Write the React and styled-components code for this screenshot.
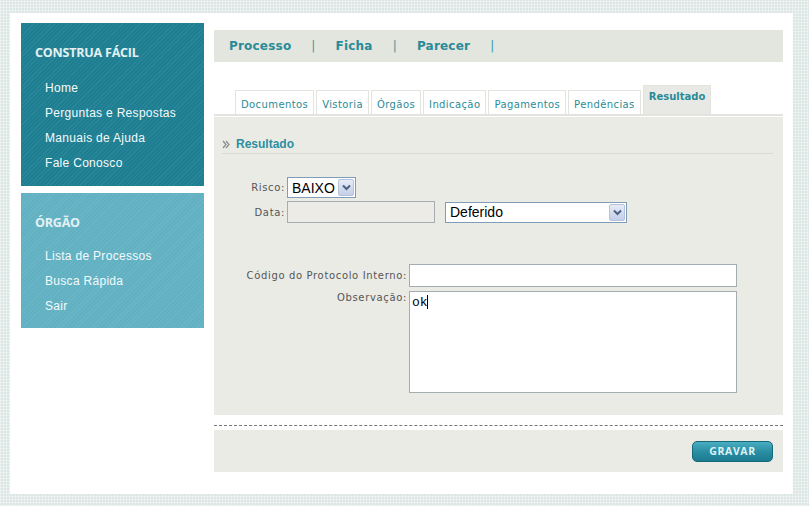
import React from 'react';
import styled, { createGlobalStyle } from 'styled-components';

const GlobalStyle = createGlobalStyle`
  html, body {
    margin: 0;
    padding: 0;
  }
  body {
    width: 809px;
    height: 506px;
    overflow: hidden;
    background-color: #dce6e4;
    background-image:
      repeating-linear-gradient(0deg, rgba(255,255,255,0.35) 0 1px, transparent 1px 3px),
      repeating-linear-gradient(90deg, rgba(255,255,255,0.35) 0 1px, transparent 1px 3px);
    font-family: "DejaVu Sans", Verdana, sans-serif;
  }
`;

const Page = styled.div`
  margin: 13px 0 0 10px;
  width: 783px;
  height: 481px;
  background: #fff;
  box-sizing: border-box;
  padding: 10px 10px 0 11px;
  display: flex;
  gap: 10px;
`;

const Sidebar = styled.aside`
  width: 183px;
  display: flex;
  flex-direction: column;
  gap: 7px;
`;

const SideBox = styled.div`
  height: ${p => p.$h}px;
  box-sizing: border-box;
  padding: 21px 0 0 14px;
  background-color: ${p => p.$bg};
  background-image: repeating-linear-gradient(
    135deg,
    rgba(255,255,255,0.05) 0 1px,
    transparent 1px 3px
  );
`;

const SideTitle = styled.h2`
  margin: 0 0 ${p => p.$gap}px;
  font-family: "Open Sans", "Liberation Sans", sans-serif;
  font-weight: 700;
  font-size: 12.5px;
  letter-spacing: -0.2px;
  color: #e4f1f3;
  line-height: 18px;
`;

const SideList = styled.ul`
  list-style: none;
  margin: 0;
  padding: 0 0 0 10px;
`;

const SideItem = styled.li`
  font-family: "Liberation Sans", Arial, sans-serif;
  font-size: 12px;
  letter-spacing: 0.3px;
  color: #f4fafb;
  line-height: 25px;
`;

const Main = styled.main`
  flex: 1;
  padding-top: 7px;
  display: flex;
  flex-direction: column;
`;

const TopNav = styled.nav`
  height: 32px;
  background: #e2e6df;
  display: flex;
  align-items: center;
  padding-left: 15px;
  gap: 20px;
  font-family: "DejaVu Sans", Verdana, sans-serif;
  font-weight: 700;
  font-size: 12px;
  letter-spacing: 0.2px;
  color: #2a8b97;
`;

const Sep = styled.span`
  font-weight: 400;
  color: #3a9aa5;
`;

const Tabs = styled.div`
  margin-top: 23px;
  padding-left: 21px;
  height: 29px;
  display: flex;
  align-items: flex-end;
  gap: 2px;
  border-bottom: 2px solid #e3e4de;
`;

const Tab = styled.div`
  height: ${p => (p.$active ? 29 : 24)}px;
  box-sizing: border-box;
  padding: ${p => (p.$active ? '5px 5px 0' : '3px 5px 0')};
  display: flex;
  align-items: ${p => (p.$active ? 'flex-start' : 'center')};
  background: ${p => (p.$active ? '#e8e9e4' : '#fff')};
  border: 1px solid #e3e4de;
  border-bottom: none;
  font-family: "DejaVu Sans", Verdana, sans-serif;
  font-size: 10px;
  font-weight: ${p => (p.$active ? 700 : 400)};
  letter-spacing: ${p => (p.$active ? 0 : 0.4)}px;
  color: #2a8b97;
`;

const Content = styled.section`
  margin-top: 1px;
  height: 298px;
  background: #ebebe6;
  padding: 18px 10px 0 8px;
  box-sizing: border-box;
`;

const SectionHead = styled.div`
  display: flex;
  align-items: center;
  gap: 6px;
  height: 18px;
  border-bottom: 1px solid #dadad3;
  font-family: "Liberation Sans", Arial, sans-serif;
  font-weight: 700;
  font-size: 12px;
  color: #2b8fa0;
`;

const FormGrid = styled.div`
  display: grid;
  grid-template-columns: ${p => p.$label}px auto auto;
  justify-content: start;
  column-gap: 2px;
  row-gap: ${p => p.$gap}px;
  align-items: center;
  margin-top: ${p => p.$top}px;
  margin-left: -8px;
`;

const Label = styled.label`
  text-align: right;
  font-family: "DejaVu Sans", Verdana, sans-serif;
  font-size: 10px;
  letter-spacing: 0.65px;
  color: #555;
  align-self: ${p => (p.$top ? 'start' : 'center')};
  padding-top: ${p => (p.$top ? 1 : 0)}px;
`;

const Select = styled.div`
  width: ${p => p.$w}px;
  height: ${p => p.$h}px;
  box-sizing: border-box;
  border: 1px solid #7f9db9;
  background: #fff;
  display: flex;
  align-items: center;
  justify-content: space-between;
  padding: 1px 1px 1px 4px;
  font-family: "Liberation Sans", Arial, sans-serif;
  font-size: 14px;
  color: #000;
  margin-left: ${p => p.$ml || 0}px;
`;

const Drop = styled.span`
  width: 16px;
  height: 100%;
  box-sizing: border-box;
  border: 1px solid #b4c2db;
  border-radius: 2px;
  background: linear-gradient(#e6ebf6, #c3cfe8);
  display: flex;
  align-items: center;
  justify-content: center;
`;

const TextInput = styled.div`
  width: ${p => p.$w}px;
  height: ${p => p.$h}px;
  box-sizing: border-box;
  border: 1px solid #a5acb2;
  background: ${p => (p.$disabled ? '#ecebe6' : '#fff')};
  font-family: "Liberation Mono", "Courier New", monospace;
  font-size: 13px;
  padding: 3px 2px;
  color: #000;
`;

const Caret = styled.span`
  display: inline-block;
  width: 1px;
  height: 14px;
  background: #000;
  vertical-align: -3px;
  margin-left: -1px;
`;

const Dashed = styled.div`
  margin-top: 10px;
  border-top: 1px dashed #777;
  height: 4px;
`;

const Footer = styled.div`
  height: 42px;
  background: #ebebe6;
  display: flex;
  justify-content: flex-end;
  align-items: center;
  padding-right: 10px;
`;

const SaveButton = styled.button`
  width: 81px;
  height: 21px;
  border: 1px solid #16687a;
  border-radius: 5px;
  background: linear-gradient(#4aaec2, #2a8ea4 50%, #1c7b90);
  color: #dff1f4;
  font-family: "Open Sans", "Liberation Sans", sans-serif;
  font-weight: 700;
  font-size: 10.5px;
  letter-spacing: 0.6px;
  padding: 0;
  cursor: pointer;
`;

const Chevron = () => (
  <svg width="9" height="7" viewBox="0 0 9 7">
    <path d="M1 1.5 L4.5 5 L8 1.5" fill="none" stroke="#4d6185" strokeWidth="2" />
  </svg>
);

const Arrows = () => (
  <svg width="8" height="9" viewBox="0 0 8 9">
    <path d="M1 1 L4 4.5 L1 8 M4 1 L7 4.5 L4 8" fill="none" stroke="#8a8a8a" strokeWidth="1.2" />
  </svg>
);

const tabs = ['Documentos', 'Vistoria', 'Órgãos', 'Indicação', 'Pagamentos', 'Pendências'];

const App = () => {
  return (
    <>
      <GlobalStyle />
      <Page>
        <Sidebar>
          <SideBox $h={163} $bg="#1f7f92">
            <SideTitle $gap={14}>CONSTRUA FÁCIL</SideTitle>
            <SideList>
              <SideItem>Home</SideItem>
              <SideItem>Perguntas e Respostas</SideItem>
              <SideItem>Manuais de Ajuda</SideItem>
              <SideItem>Fale Conosco</SideItem>
            </SideList>
          </SideBox>
          <SideBox $h={135} $bg="#62b1c3">
            <SideTitle $gap={12}>ÓRGÃO</SideTitle>
            <SideList>
              <SideItem>Lista de Processos</SideItem>
              <SideItem>Busca Rápida</SideItem>
              <SideItem>Sair</SideItem>
            </SideList>
          </SideBox>
        </Sidebar>

        <Main>
          <TopNav>
            <span>Processo</span>
            <Sep>|</Sep>
            <span>Ficha</span>
            <Sep>|</Sep>
            <span>Parecer</span>
            <Sep>|</Sep>
          </TopNav>

          <Tabs>
            {tabs.map(t => (
              <Tab key={t}>{t}</Tab>
            ))}
            <Tab $active>Resultado</Tab>
          </Tabs>

          <Content>
            <SectionHead>
              <Arrows />
              Resultado
            </SectionHead>

            <FormGrid $label={71} $gap={3} $top={23}>
              <Label>Risco:</Label>
              <Select $w={69} $h={21}>
                BAIXO
                <Drop><Chevron /></Drop>
              </Select>
              <span />
              <Label>Data:</Label>
              <TextInput $w={148} $h={22} $disabled />
              <Select $w={182} $h={21} $ml={8}>
                Deferido
                <Drop><Chevron /></Drop>
              </Select>
            </FormGrid>

            <FormGrid $label={193} $gap={4} $top={41}>
              <Label>Código do Protocolo Interno:</Label>
              <TextInput $w={328} $h={23} />
              <span />
              <Label $top>Observação:</Label>
              <TextInput $w={328} $h={102}>
                ok<Caret />
              </TextInput>
              <span />
            </FormGrid>
          </Content>

          <Dashed />
          <Footer>
            <SaveButton>GRAVAR</SaveButton>
          </Footer>
        </Main>
      </Page>
    </>
  );
};

export default App;
